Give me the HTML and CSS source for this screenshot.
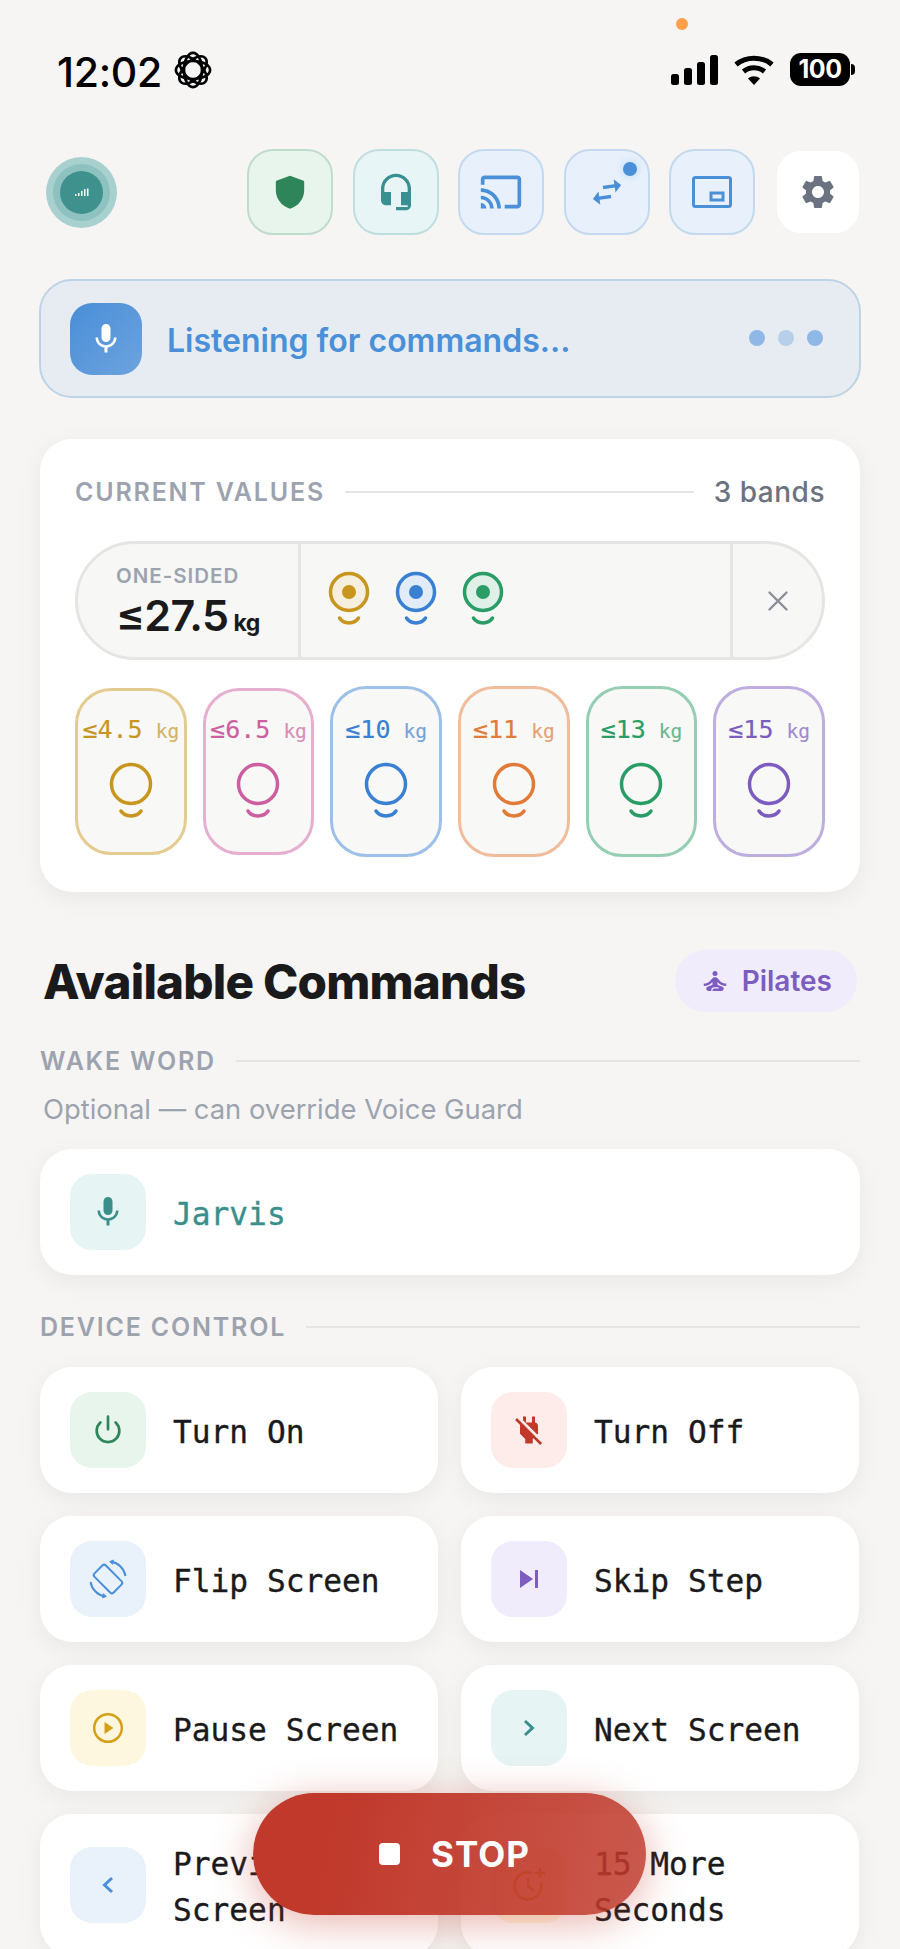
FILE: index.html
```html
<!DOCTYPE html>
<html lang="en">
<head>
    <meta charset="UTF-8">
    <meta name="viewport" content="width=device-width, initial-scale=1.0">
    <title>Voice Commands</title>
    <link rel="stylesheet" href="styles.css">
</head>
<body>
    <span class="camera-dot"></span>

    <!-- Status bar -->
    <div class="status-bar">
        <div class="status-left">
            <span class="time">12:02</span>
            <svg class="flower" viewBox="0 0 40 40" fill="none" stroke="#000" stroke-width="2.800">
                <ellipse cx="20" cy="20" rx="9.500" ry="18"/>
                <ellipse cx="20" cy="20" rx="9.500" ry="18" transform="rotate(45 20 20)"/>
                <ellipse cx="20" cy="20" rx="9.500" ry="18" transform="rotate(90 20 20)"/>
                <ellipse cx="20" cy="20" rx="9.500" ry="18" transform="rotate(135 20 20)"/>
            </svg>
        </div>
        <div class="status-right">
            <svg width="47" height="30" viewBox="0 0 47 30" fill="#000">
                <rect x="0" y="19" width="8" height="11" rx="2.500"/>
                <rect x="13" y="13" width="8" height="17" rx="2.500"/>
                <rect x="26" y="7" width="8" height="23" rx="2.500"/>
                <rect x="39" y="0" width="8" height="30" rx="2.500"/>
            </svg>
            <svg class="wifi" width="40" height="30" viewBox="0 0 40 30" fill="none" stroke="#000" stroke-width="5">
                <path d="M2 9.500C12 1 28 1 38 9.500"/>
                <path d="M9.500 16.500c6-5 15-5 21 0"/>
                <path d="M20 30l-6-6.500c3.500-3 8.500-3 12 0z" fill="#000" stroke="none"/>
            </svg>
            <div class="battery">100</div>
        </div>
    </div>

    <!-- Toolbar -->
    <div class="toolbar">
        <div class="avatar">
            <svg width="14" height="8" viewBox="0 0 14 8" fill="#fff">
                <rect x="0" y="6" width="1.500" height="2"/>
                <rect x="3" y="5" width="1.500" height="3"/>
                <rect x="6" y="3" width="1.500" height="5"/>
                <rect x="9" y="1" width="1.500" height="7"/>
                <rect x="12" y="0.500" width="1.500" height="7.500"/>
            </svg>
        </div>
        <div class="tool-group">
            <div class="tool tool-green">
                <svg width="40" height="40" viewBox="0 0 24 24" fill="currentColor"><path d="M12 2.200L4.200 5.100c-.4.150-.7.500-.7 1V11c0 5.100 3.600 9.800 8.500 11 4.900-1.200 8.500-5.900 8.500-11V6.100c0-.5-.3-.85-.7-1z"/></svg>
            </div>
            <div class="tool tool-teal">
                <svg width="40" height="40" viewBox="0 0 24 24" fill="currentColor"><path d="M12 1c-4.970 0-9 4.030-9 9v7c0 1.660 1.340 3 3 3h3v-8H5v-2c0-3.870 3.130-7 7-7s7 3.130 7 7v2h-4v8h4v1h-7v2h6c1.660 0 3-1.340 3-3V10c0-4.970-4.030-9-9-9z"/></svg>
            </div>
            <div class="tool tool-blue">
                <svg width="44" height="44" viewBox="0 0 24 24" fill="currentColor"><path d="M21 3H3c-1.100 0-2 .9-2 2v3h2V5h18v14h-7v2h7c1.100 0 2-.9 2-2V5c0-1.100-.9-2-2-2zM1 18v3h3c0-1.660-1.340-3-3-3zm0-4v2c2.760 0 5 2.240 5 5h2c0-3.870-3.130-7-7-7zm0-4v2c4.970 0 9 4.030 9 9h2c0-6.080-4.930-11-11-11z"/></svg>
            </div>
            <div class="tool tool-blue">
                <svg class="swap" width="40" height="40" viewBox="0 0 24 24" fill="currentColor"><path d="M6.990 11L3 15l3.990 4v-3H14v-2H6.990v-3zM21 9l-3.990-4v3H10v2h7.010v3L21 9z"/></svg>
                <span class="tool-dot"></span>
            </div>
            <div class="tool tool-blue">
                <svg width="40" height="32" viewBox="0 0 40 32" fill="none" stroke="currentColor" stroke-width="3">
                    <rect x="1.500" y="1.500" width="37" height="29" rx="2"/>
                    <rect x="19" y="17" width="12" height="7"/>
                </svg>
            </div>
            <div class="tool tool-settings">
                <svg width="40" height="40" viewBox="0 0 24 24" fill="currentColor"><path d="M19.140 12.940c.04-.3.06-.61.06-.94 0-.32-.02-.64-.07-.94l2.030-1.580a.49.49 0 0 0 .12-.61l-1.920-3.320a.488.488 0 0 0-.59-.22l-2.390.96c-.5-.38-1.030-.7-1.620-.94l-.36-2.540a.484.484 0 0 0-.48-.41h-3.840c-.24 0-.43.17-.47.41l-.36 2.540c-.59.24-1.130.57-1.620.94l-2.390-.96c-.22-.08-.47 0-.59.22L2.740 8.870c-.12.21-.08.47.12.61l2.030 1.580c-.05.3-.09.63-.09.94s.02.64.07.94l-2.030 1.580a.49.49 0 0 0-.12.61l1.920 3.320c.12.22.37.29.59.22l2.390-.96c.5.38 1.030.7 1.620.94l.36 2.540c.05.24.24.41.48.41h3.840c.24 0 .44-.17.47-.41l.36-2.540c.59-.24 1.130-.56 1.620-.94l2.390.96c.22.08.47 0 .59-.22l1.920-3.320c.12-.22.07-.47-.12-.61l-2.010-1.580zM12 15.600c-1.980 0-3.600-1.620-3.600-3.600s1.620-3.600 3.600-3.600 3.600 1.620 3.600 3.600-1.620 3.600-3.600 3.600z"/></svg>
            </div>
        </div>
    </div>

    <!-- Listening banner -->
    <div class="listening">
        <div class="listening-icon">
            <svg width="36" height="36" viewBox="0 0 24 24" fill="#fff"><path d="M12 14c1.660 0 3-1.340 3-3V5c0-1.660-1.340-3-3-3S9 3.340 9 5v6c0 1.660 1.340 3 3 3zm5.300-3c0 3-2.540 5.100-5.300 5.100S6.700 14 6.700 11H5c0 3.410 2.720 6.230 6 6.720V21h2v-3.280c3.280-.48 6-3.300 6-6.720h-1.700z"/></svg>
        </div>
        <span class="listening-text">Listening for commands...</span>
        <div class="dots">
            <span class="dot"></span>
            <span class="dot dot-faint"></span>
            <span class="dot"></span>
        </div>
    </div>

    <!-- Current values -->
    <div class="values-card">
        <div class="section-title">
            <span>CURRENT VALUES</span>
            <span class="rule"></span>
            <span class="bands-count">3 bands</span>
        </div>

        <div class="summary">
            <div class="summary-value">
                <div class="summary-label">ONE-SIDED</div>
                <div class="summary-number">≤27.5<small>kg</small></div>
            </div>
            <div class="summary-targets">
                <svg class="gold" width="42" height="56" viewBox="0 0 42 56"><circle class="target-fill" cx="21" cy="21" r="18.500"/><circle cx="21" cy="21" r="7" fill="currentColor"/><path class="smile" d="M11.500 47c4 6.500 15 6.500 19 0"/></svg>
                <svg class="blue" width="42" height="56" viewBox="0 0 42 56"><circle class="target-fill" cx="21" cy="21" r="18.500"/><circle cx="21" cy="21" r="7" fill="currentColor"/><path class="smile" d="M11.500 47c4 6.500 15 6.500 19 0"/></svg>
                <svg class="green" width="42" height="56" viewBox="0 0 42 56"><circle class="target-fill" cx="21" cy="21" r="18.500"/><circle cx="21" cy="21" r="7" fill="currentColor"/><path class="smile" d="M11.500 47c4 6.500 15 6.500 19 0"/></svg>
            </div>
            <div class="summary-close">
                <svg width="24" height="24" viewBox="0 0 24 24" fill="none" stroke="#8b8f98" stroke-width="2.400" stroke-linecap="round"><path d="M3.500 3.500l17 17M20.500 3.500l-17 17"/></svg>
            </div>
        </div>

        <div class="bands">
            <div class="band band-small gold"><div class="band-label">≤4.5 <small>kg</small></div><svg width="46" height="62" viewBox="0 0 46 62"><circle class="ring" cx="23" cy="23" r="19.500"/><path class="smile" d="M13 50c4 6.500 16 6.500 20 0"/></svg></div>
            <div class="band band-small pink"><div class="band-label">≤6.5 <small>kg</small></div><svg width="46" height="62" viewBox="0 0 46 62"><circle class="ring" cx="23" cy="23" r="19.500"/><path class="smile" d="M13 50c4 6.500 16 6.500 20 0"/></svg></div>
            <div class="band blue"><div class="band-label">≤10 <small>kg</small></div><svg width="46" height="62" viewBox="0 0 46 62"><circle class="ring" cx="23" cy="23" r="19.500"/><path class="smile" d="M13 50c4 6.500 16 6.500 20 0"/></svg></div>
            <div class="band orange"><div class="band-label">≤11 <small>kg</small></div><svg width="46" height="62" viewBox="0 0 46 62"><circle class="ring" cx="23" cy="23" r="19.500"/><path class="smile" d="M13 50c4 6.500 16 6.500 20 0"/></svg></div>
            <div class="band green"><div class="band-label">≤13 <small>kg</small></div><svg width="46" height="62" viewBox="0 0 46 62"><circle class="ring" cx="23" cy="23" r="19.500"/><path class="smile" d="M13 50c4 6.500 16 6.500 20 0"/></svg></div>
            <div class="band purple"><div class="band-label">≤15 <small>kg</small></div><svg width="46" height="62" viewBox="0 0 46 62"><circle class="ring" cx="23" cy="23" r="19.500"/><path class="smile" d="M13 50c4 6.500 16 6.500 20 0"/></svg></div>
        </div>
    </div>

    <!-- Commands -->
    <div class="commands-head">
        <h2>Available Commands</h2>
        <div class="mode-pill">
            <svg width="30" height="30" viewBox="0 0 24 24" fill="currentColor"><circle cx="12" cy="6" r="2"/><path d="M21 16v-2c-2.240 0-4.160-.96-5.600-2.680l-1.340-1.600A1.980 1.980 0 0 0 12.530 9h-1.050c-.59 0-1.150.26-1.530.72l-1.340 1.600C7.160 13.040 5.240 14 3 14v2c2.770 0 5.190-1.170 7-3.250V15l-3.880 1.550c-.67.27-1.120.93-1.120 1.660C5 19.200 5.800 20 6.790 20H9v-.5a2.500 2.500 0 0 1 2.500-2.500h3c.28 0 .5.22.5.5s-.22.5-.5.5h-3c-.83 0-1.500.67-1.500 1.500v.5h7.210c.99 0 1.790-.8 1.790-1.790 0-.73-.45-1.390-1.120-1.660L14 15v-2.250c1.810 2.080 4.230 3.250 7 3.250z"/></svg>
            <span>Pilates</span>
        </div>
    </div>

    <div class="section-title section-wake">
        <span>WAKE WORD</span>
        <span class="rule"></span>
    </div>
    <p class="section-note">Optional — can override Voice Guard</p>
    <div class="command wake">
        <div class="command-icon bg-teal">
            <svg width="36" height="36" viewBox="0 0 24 24" fill="#3a8f8b"><path d="M12 14c1.660 0 3-1.340 3-3V5c0-1.660-1.340-3-3-3S9 3.340 9 5v6c0 1.660 1.340 3 3 3zm5.300-3c0 3-2.540 5.100-5.300 5.100S6.700 14 6.700 11H5c0 3.410 2.720 6.230 6 6.720V21h2v-3.280c3.280-.48 6-3.300 6-6.720h-1.700z"/></svg>
        </div>
        <span class="command-name wake-name">Jarvis</span>
    </div>

    <div class="section-title section-device">
        <span>DEVICE CONTROL</span>
        <span class="rule"></span>
    </div>
    <div class="command-grid">
        <div class="command">
            <div class="command-icon bg-green">
                <svg width="32" height="32" viewBox="0 0 24 24" fill="none" stroke="#2f855a" stroke-width="2" stroke-linecap="round"><path d="M17.700 6.300a8.500 8.500 0 1 1-11.400 0M12 2v9.500"/></svg>
            </div>
            <span class="command-name">Turn On</span>
        </div>
        <div class="command">
            <div class="command-icon bg-red">
                <svg width="36" height="36" viewBox="0 0 24 24" fill="#c0392b"><path d="M18 14.490V9c0-1-1.010-2.010-2-2V3h-2v4h-4V3H8v2.480l9.510 9.500.49-.49zm-1.760 1.770L7.200 7.200l-.01.01L3.980 4 2.710 5.250l3.360 3.360C6.040 8.740 6 8.870 6 9v5.480L9.500 18v3h5v-3l.48-.48L19.450 22l1.260-1.280-4.470-4.460z"/></svg>
            </div>
            <span class="command-name">Turn Off</span>
        </div>
        <div class="command">
            <div class="command-icon bg-blue">
                <svg width="40" height="40" viewBox="0 0 40 40" fill="none" stroke="#4a90d9" stroke-width="2">
                    <rect x="12" y="6.500" width="16" height="27" rx="2.500" transform="rotate(-45 20 20)"/>
                    <path d="M23 2.500a18 18 0 0 1 14.500 14.500M17 37.500A18 18 0 0 1 2.500 23"/>
                    <path d="M26 .5l-5 2 4 3.500zM14 39.500l5-2-4-3.500z" fill="#4a90d9" stroke="none"/>
                </svg>
            </div>
            <span class="command-name">Flip Screen</span>
        </div>
        <div class="command">
            <div class="command-icon bg-purple">
                <svg width="18" height="18" viewBox="0 0 18 18" fill="#7c5cbf"><path d="M0 0l13 9-13 9z"/><rect x="15" y="0" width="3" height="18"/></svg>
            </div>
            <span class="command-name">Skip Step</span>
        </div>
        <div class="command">
            <div class="command-icon bg-yellow">
                <svg width="32" height="32" viewBox="0 0 32 32" fill="#d4a017"><circle cx="16" cy="16" r="13.800" fill="none" stroke="#d4a017" stroke-width="2.500"/><path d="M12.500 10l9 6-9 6z"/></svg>
            </div>
            <span class="command-name">Pause Screen</span>
        </div>
        <div class="command">
            <div class="command-icon bg-teal">
                <svg width="12" height="18" viewBox="0 0 12 18" fill="none" stroke="#3a8f8b" stroke-width="3"><path d="M2 2l7.500 7L2 16"/></svg>
            </div>
            <span class="command-name">Next Screen</span>
        </div>
        <div class="command">
            <div class="command-icon bg-blue">
                <svg width="12" height="18" viewBox="0 0 12 18" fill="none" stroke="#4a90d9" stroke-width="3"><path d="M10 2L2.500 9l7.500 7"/></svg>
            </div>
            <span class="command-name">Previous Screen</span>
        </div>
        <div class="command">
            <div class="command-icon bg-yellow">
                <svg width="36" height="36" viewBox="0 0 36 36" fill="none" stroke="#d4a017" stroke-width="2.500"><path d="M21 6a13.500 13.500 0 1 0 9 9.500M17 11v8l6 5M29 1v10M24 6h10"/></svg>
            </div>
            <span class="command-name">15 More Seconds</span>
        </div>
    </div>

    <div class="stop-btn">
        <span class="stop-square"></span>
        <span>STOP</span>
    </div>
</body>
</html>
```

FILE: styles.css
```css
:root {
    --text-dark: #1a1a1c;
    --muted: #9ca3af;
    --gold: #c8961e;
    --pink: #cc5fa0;
    --blue: #3a80d2;
    --orange: #e07b39;
    --green: #2a9d66;
    --purple: #7c5cbf;
    --card-shadow: 0 6px 24px rgba(0, 0, 0, 0.06);
}

* {
    margin: 0;
    padding: 0;
    box-sizing: border-box;
}

html, body {
    height: 1949px;
    overflow: hidden;
}

body {
    position: relative;
    width: 900px;
    padding: 0 40px;
    font-family: 'Inter', 'Liberation Sans', sans-serif;
    color: var(--text-dark);
    background-color: #f6f5f3;
}

.camera-dot {
    position: absolute;
    left: 676px;
    top: 18px;
    width: 12px;
    height: 12px;
    border-radius: 50%;
    background-color: #ff9f4a;
}

/* Status bar */
.status-bar {
    display: flex;
    justify-content: space-between;
    align-items: center;
    height: 149px;
    padding: 36px 10px 46px 17px;
}

.status-left {
    display: flex;
    align-items: center;
    gap: 12px;
}

.time {
    margin-top: 4px;
    font-size: 41px;
    font-weight: 500;
    color: #000;
    letter-spacing: -0.3px;
}

.flower {
    width: 38px;
    height: 38px;
}

.status-right {
    display: flex;
    align-items: center;
    gap: 16px;
}

.battery {
    position: relative;
    width: 60px;
    height: 33px;
    border-radius: 11px;
    background-color: #000;
    color: #fff;
    font-size: 25px;
    font-weight: 700;
    line-height: 33px;
    text-align: center;
    letter-spacing: -0.5px;
}

.battery::after {
    content: "";
    position: absolute;
    right: -5px;
    top: 11px;
    width: 4px;
    height: 11px;
    border-radius: 0 4px 4px 0;
    background-color: #000;
}

/* Toolbar */
.toolbar {
    display: flex;
    align-items: center;
    height: 86px;
}

.avatar {
    display: flex;
    align-items: center;
    justify-content: center;
    width: 43px;
    height: 43px;
    margin-left: 20px;
    border-radius: 50%;
    background-color: #3f918e;
    box-shadow: 0 0 0 7px #8dc2c0, 0 0 0 14px #a8d0cf;
}

.tool-group {
    display: flex;
    align-items: center;
    gap: 19.500px;
    margin-left: auto;
    margin-right: 1px;
}

.tool {
    position: relative;
    display: flex;
    align-items: center;
    justify-content: center;
    width: 86px;
    height: 86px;
    border: 2px solid;
    border-radius: 26px;
}

.tool-green {
    color: #2f855a;
    background-color: #e8f5ec;
    border-color: #bfdccd;
}

.tool-teal {
    color: #3a8f93;
    background-color: #e8f5f6;
    border-color: #c0dedd;
}

.tool-blue {
    color: #4a90d9;
    background-color: #e8f1fb;
    border-color: #c3d9ef;
}

.tool-settings {
    width: 82px;
    height: 82px;
    margin-left: 2.500px;
    border: none;
    border-radius: 24px;
    color: #6b7280;
    background-color: #fff;
}

.swap {
    transform: rotate(-8deg);
}

.tool-dot {
    position: absolute;
    top: 11px;
    right: 11px;
    width: 14px;
    height: 14px;
    border-radius: 50%;
    background-color: #4a90d9;
    box-shadow: 0 0 8px rgba(74, 144, 217, 0.3);
}

/* Listening banner */
.listening {
    display: flex;
    align-items: center;
    gap: 25px;
    height: 119px;
    margin: 44px -1px 0;
    padding: 0 36px 0 29px;
    border: 2px solid #bdd4e6;
    border-radius: 33px;
    background-color: #e6ecf2;
}

.listening-icon {
    display: flex;
    align-items: center;
    justify-content: center;
    width: 72px;
    height: 72px;
    border-radius: 22px;
    background: linear-gradient(135deg, #4a8ed8, #6ca3de);
}

.listening-text {
    margin-top: 4px;
    font-size: 32px;
    font-weight: 600;
    color: #4a90d9;
}

.dots {
    display: flex;
    gap: 13px;
    margin-left: auto;
    margin-top: -1px;
}

.dot {
    width: 16px;
    height: 16px;
    border-radius: 50%;
    background-color: #8fb8e6;
}

.dot-faint {
    background-color: #b6d0e9;
}

/* Current values card */
.values-card {
    margin-top: 41px;
    padding: 38px 35px 35px;
    border-radius: 32px;
    background-color: #fff;
    box-shadow: var(--card-shadow);
}

.section-title {
    display: flex;
    align-items: center;
    gap: 20px;
    height: 30px;
    font-size: 25px;
    font-weight: 600;
    letter-spacing: 1.800px;
    color: var(--muted);
}

.rule {
    flex: 1;
    height: 2px;
    background-color: #e5e5e3;
}

.bands-count {
    font-size: 28px;
    font-weight: 500;
    letter-spacing: 0.5px;
    color: #6b7280;
}

.summary {
    display: flex;
    height: 119px;
    margin-top: 34px;
    border: 3px solid #e5e5e3;
    border-radius: 60px;
    background-color: #f7f7f5;
}

.summary-value {
    width: 223px;
    padding: 19px 0 0 38px;
    border-right: 3px solid #e5e5e3;
}

.summary-label {
    font-size: 20.500px;
    font-weight: 600;
    letter-spacing: 1px;
    color: var(--muted);
}

.summary-number {
    margin-top: 1px;
    font-size: 43px;
    font-weight: 600;
    letter-spacing: -0.6px;
}

.summary-number small {
    margin-left: 5px;
    font-size: 23px;
    font-weight: 700;
}

.summary-targets {
    flex: 1;
    display: flex;
    align-items: flex-start;
    gap: 25px;
    padding: 27px 0 0 27px;
}

.summary-close {
    display: flex;
    align-items: center;
    justify-content: center;
    width: 92px;
    border-left: 3px solid #e5e5e3;
}

.target-fill {
    fill: color-mix(in srgb, currentColor 15%, #fff);
    stroke: currentColor;
    stroke-width: 3.500;
}

.ring {
    fill: none;
    stroke: currentColor;
    stroke-width: 3.500;
}

.smile {
    fill: none;
    stroke: currentColor;
    stroke-width: 3.500;
    stroke-linecap: round;
}

.gold { color: var(--gold); }
.pink { color: var(--pink); }
.blue { color: var(--blue); }
.orange { color: var(--orange); }
.green { color: var(--green); }
.purple { color: var(--purple); }

.bands {
    display: grid;
    grid-template-columns: repeat(6, 1fr);
    align-items: center;
    gap: 16px;
    margin-top: 26px;
}

.band {
    display: flex;
    flex-direction: column;
    align-items: center;
    height: 171px;
    padding-top: 25px;
    border: 3px solid color-mix(in srgb, currentColor 50%, #fff);
    border-radius: 36px;
    background-color: #f8f8f6;
}

.band-small {
    height: 167px;
    padding-top: 23px;
}

.band svg {
    margin-top: 13px;
}

.band-label {
    font-family: 'DejaVu Sans Mono', 'Liberation Mono', monospace;
    font-size: 25px;
    line-height: 32px;
    word-spacing: -2px;
    white-space: nowrap;
    -webkit-text-stroke: 0.15px currentColor;
}

.band-label small {
    font-size: 19.500px;
    opacity: 0.7;
}

/* Commands */
.commands-head {
    display: flex;
    justify-content: space-between;
    align-items: center;
    height: 62px;
    margin-top: 58px;
    padding: 0 3px 0 3px;
}

.commands-head h2 {
    font-size: 47.600px;
    font-weight: 800;
    letter-spacing: -0.8px;
}

.mode-pill {
    display: flex;
    align-items: center;
    gap: 12px;
    height: 62px;
    padding: 0 25px;
    border-radius: 31px;
    font-size: 28px;
    font-weight: 600;
    color: var(--purple);
    background-color: #f1ecfc;
}

.section-wake {
    margin-top: 34px;
}

.section-device {
    margin-top: 37px;
}

.section-note {
    margin-top: 15px;
    padding-left: 3px;
    font-size: 27.400px;
    line-height: 36px;
    color: var(--muted);
}

.command {
    display: flex;
    align-items: center;
    gap: 27px;
    padding: 25px 30px;
    border-radius: 32px;
    background-color: #fff;
    box-shadow: var(--card-shadow);
}

.wake {
    margin-top: 22px;
}

.command-icon {
    flex: none;
    display: flex;
    align-items: center;
    justify-content: center;
    width: 76px;
    height: 76px;
    border-radius: 22px;
}

.bg-teal { background-color: #e6f4f3; }
.bg-green { background-color: #e8f5ec; }
.bg-red { background-color: #fdecea; }
.bg-blue { background-color: #e9f1fb; }
.bg-purple { background-color: #f1ecfc; }
.bg-yellow { background-color: #fef7e0; }

.command-name {
    margin-bottom: -2px;
    padding-top: 2px;
    font-family: 'DejaVu Sans Mono', 'Liberation Mono', monospace;
    font-size: 31.200px;
    line-height: 46px;
    -webkit-text-stroke: 0.35px currentColor;
}

.wake-name {
    color: #3a8f8b;
}

.command-grid {
    display: grid;
    grid-template-columns: 398px 398px;
    align-items: start;
    gap: 23px;
    margin-top: 25px;
}

/* Stop button */
.stop-btn {
    position: absolute;
    left: 253px;
    top: 1793px;
    display: flex;
    align-items: center;
    justify-content: center;
    gap: 31px;
    width: 393px;
    height: 122px;
    padding-left: 10px;
    border-radius: 61px;
    font-size: 35px;
    font-weight: 700;
    letter-spacing: 1px;
    color: #fff;
    background: linear-gradient(100deg, #c0392b 20%, rgba(192, 57, 43, 0.84));
    box-shadow: 0 8px 40px rgba(192, 57, 43, 0.38);
}

.stop-square {
    width: 21px;
    height: 22px;
    border-radius: 4px;
    background-color: #fff;
}
```
